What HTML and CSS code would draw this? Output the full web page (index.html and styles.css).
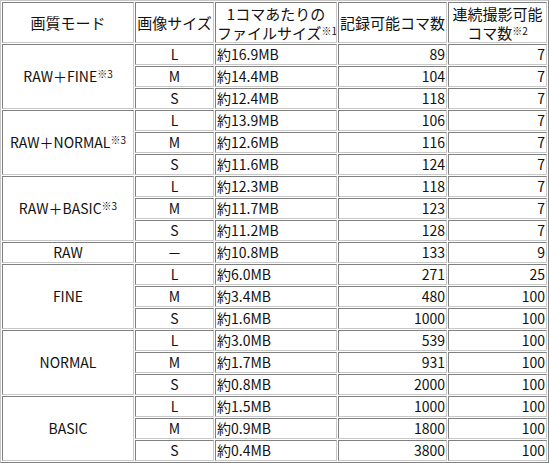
FILE: index.html
```html
<!DOCTYPE html>
<html lang="ja">
<head>
<meta charset="utf-8">
<link rel="stylesheet" href="styles.css">
</head>
<body>
<table class="spec">
<colgroup>
<col class="c1"><col class="c2"><col class="c3"><col class="c4"><col class="c5">
</colgroup>
<tr class="head">
<td class="ctr">画質モード</td>
<td class="ctr">画像サイズ</td>
<td class="ctr">1コマあたりの<br>ファイルサイズ<sup>※1</sup></td>
<td class="ctr">記録可能コマ数</td>
<td class="ctr">連続撮影可能<br>コマ数<sup>※2</sup></td>
</tr>
<tr><td class="ctr" rowspan="3">RAW＋FINE<sup>※3</sup></td><td class="ctr">L</td><td>約16.9MB</td><td class="num">89</td><td class="num">7</td></tr>
<tr><td class="ctr">M</td><td>約14.4MB</td><td class="num">104</td><td class="num">7</td></tr>
<tr><td class="ctr">S</td><td>約12.4MB</td><td class="num">118</td><td class="num">7</td></tr>
<tr><td class="ctr" rowspan="3">RAW＋NORMAL<sup>※3</sup></td><td class="ctr">L</td><td>約13.9MB</td><td class="num">106</td><td class="num">7</td></tr>
<tr><td class="ctr">M</td><td>約12.6MB</td><td class="num">116</td><td class="num">7</td></tr>
<tr><td class="ctr">S</td><td>約11.6MB</td><td class="num">124</td><td class="num">7</td></tr>
<tr><td class="ctr" rowspan="3">RAW＋BASIC<sup>※3</sup></td><td class="ctr">L</td><td>約12.3MB</td><td class="num">118</td><td class="num">7</td></tr>
<tr><td class="ctr">M</td><td>約11.7MB</td><td class="num">123</td><td class="num">7</td></tr>
<tr><td class="ctr">S</td><td>約11.2MB</td><td class="num">128</td><td class="num">7</td></tr>
<tr><td class="ctr">RAW</td><td class="ctr">－</td><td>約10.8MB</td><td class="num">133</td><td class="num">9</td></tr>
<tr><td class="ctr" rowspan="3">FINE</td><td class="ctr">L</td><td>約6.0MB</td><td class="num">271</td><td class="num">25</td></tr>
<tr><td class="ctr">M</td><td>約3.4MB</td><td class="num">480</td><td class="num">100</td></tr>
<tr><td class="ctr">S</td><td>約1.6MB</td><td class="num">1000</td><td class="num">100</td></tr>
<tr><td class="ctr" rowspan="3">NORMAL</td><td class="ctr">L</td><td>約3.0MB</td><td class="num">539</td><td class="num">100</td></tr>
<tr><td class="ctr">M</td><td>約1.7MB</td><td class="num">931</td><td class="num">100</td></tr>
<tr><td class="ctr">S</td><td>約0.8MB</td><td class="num">2000</td><td class="num">100</td></tr>
<tr><td class="ctr" rowspan="3">BASIC</td><td class="ctr">L</td><td>約1.5MB</td><td class="num">1000</td><td class="num">100</td></tr>
<tr><td class="ctr">M</td><td>約0.9MB</td><td class="num">1800</td><td class="num">100</td></tr>
<tr><td class="ctr">S</td><td>約0.4MB</td><td class="num">3800</td><td class="num">100</td></tr>
</table>
</body>
</html>
```
FILE: styles.css
```css
html, body {
  margin: 0;
  padding: 0;
  background: #ffffff;
}
.spec {
  table-layout: fixed;
  width: 549px;
  border-collapse: separate;
  border-spacing: 1px;
  border: 1px solid;
  border-color: #c8c8c8 #808080 #808080 #c8c8c8;
  font-family: "Noto Sans CJK JP", "Noto Sans", sans-serif;
  font-size: 14px;
  color: #111;
}
.c1 { width: 132px; }
.c2 { width: 79px; }
.c3 { width: 122px; }
.c4 { width: 109px; }
.c5 { width: 99px; }
.spec td {
  border: 1px solid;
  border-color: #808080 #c8c8c8 #c8c8c8 #808080;
  padding: 0 1px;
  height: 19px;
  line-height: 19px;
  white-space: nowrap;
  overflow: hidden;
  vertical-align: middle;
  text-align: left;
}
.spec .head td {
  height: 39px;
  font-size: 15px;
}
.spec td.ctr {
  text-align: center;
}
.spec td.num {
  text-align: right;
}
.spec sup {
  font-size: 10px;
  line-height: 0;
  vertical-align: 4px;
}
```
